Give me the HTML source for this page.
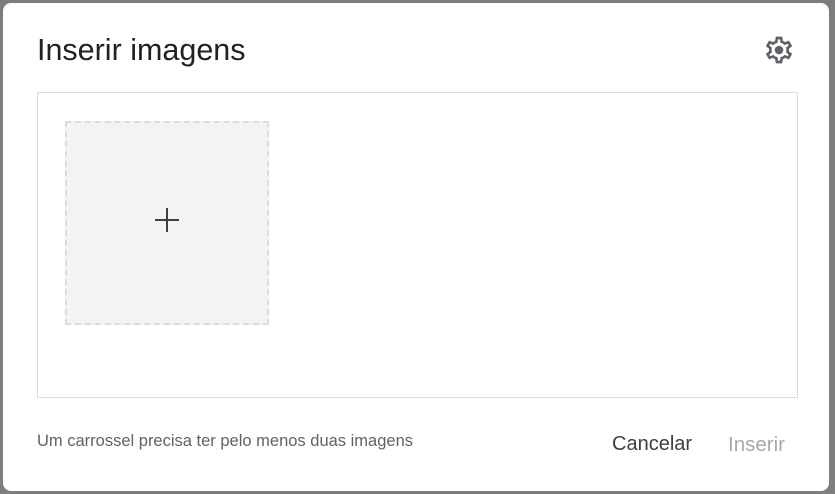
<!DOCTYPE html>
<html><head><meta charset="utf-8"><style>
html,body{margin:0;padding:0;width:835px;height:494px;overflow:hidden;background:#7d7d7d;font-family:"Liberation Sans",sans-serif;}
.dlg{position:absolute;left:3px;top:3px;width:826px;height:488px;background:#fff;border-radius:8px;}
.title{position:absolute;left:37px;top:33px;font-size:30.5px;color:#202124;white-space:nowrap;}
.gear{position:absolute;left:763px;top:34px;}
.box{position:absolute;left:37px;top:92px;width:759px;height:304px;border:1px solid #dadce0;}
.add{position:absolute;left:65px;top:121px;width:200px;height:200px;border:2px dashed #dadce0;background:#f1f3f4;}
.plus1{position:absolute;left:155px;top:218.5px;width:24px;height:2.5px;background:#3c4043;}
.plus2{position:absolute;left:165.8px;top:208px;width:2.5px;height:24px;background:#3c4043;}
.msg{position:absolute;left:37px;top:432px;font-size:16.5px;color:#5f6368;white-space:nowrap;}
.cancel{position:absolute;left:612px;top:433px;font-size:20px;color:#3c4043;}
.ins{position:absolute;left:728px;top:433px;font-size:20.5px;color:#a8a8a8;}
</style></head><body>
<div class="dlg"></div>
<div class="title">Inserir imagens</div>
<svg class="gear" width="32" height="32" viewBox="0 0 24 24"><path fill="#5f6368" d="M19.43 12.98c.04-.32.07-.64.07-.98s-.03-.66-.07-.98l2.11-1.650c.19-.15.24-.42.12-.64l-2-3.46c-.12-.22-.39-.3-.61-.22l-2.49 1c-.52-.4-1.08-.73-1.690-.98l-.38-2.65C14.46 2.18 14.25 2 14 2h-4c-.25 0-.46.18-.49.42l-.38 2.65c-.61.25-1.17.59-1.69.98l-2.49-1c-.23-.09-.49 0-.61.22l-2 3.46c-.13.22-.07.49.12.64l2.11 1.65c-.04.32-.07.65-.07.98s.03.66.07.98l-2.11 1.65c-.19.15-.24.42-.12.64l2 3.46c.12.22.39.3.61.22l2.49-1c.52.4 1.08.73 1.69.98l.38 2.65c.03.24.24.42.49.42h4c.25 0 .46-.18.49-.42l.38-2.65c.61-.25 1.17-.59 1.69-.98l2.49 1c.23.09.49 0 .61-.22l2-3.46c.12-.22.07-.49-.12-.64l-2.11-1.65zM17.45 11.27c.04.31.05.52.05.73 0 .21-.02.43-.05.73l-.14 1.13.89.7 1.08.84-.7 1.21-1.27-.51-1.04-.42-.9.68c-.43.32-.84.56-1.25.73l-1.06.43-.16 1.13-.2 1.35h-1.4l-.19-1.35-.16-1.13-1.06-.43c-.43-.18-.83-.41-1.23-.71l-.91-.7-1.06.43-1.27.51-.7-1.21 1.08-.84.89-.7-.14-1.13c-.03-.31-.05-.54-.05-.74s.02-.43.05-.73l.14-1.13-.89-.7-1.08-.84.7-1.21 1.27.51 1.04.42.9-.68c.43-.32.84-.56 1.25-.73l1.06-.43.16-1.13.2-1.35h1.39l.19 1.35.16 1.13 1.06.43c.43.18.83.41 1.23.71l.91.7 1.06-.43 1.27-.51.7 1.21-1.07.85-.89.7.14 1.130z"/><circle cx="12" cy="12" r="3.2" fill="#5f6368"/></svg>
<div class="box"></div>
<div class="add"></div>
<div class="plus1"></div><div class="plus2"></div>
<div class="msg">Um carrossel precisa ter pelo menos duas imagens</div>
<div class="cancel">Cancelar</div>
<div class="ins">Inserir</div>
</body></html>
